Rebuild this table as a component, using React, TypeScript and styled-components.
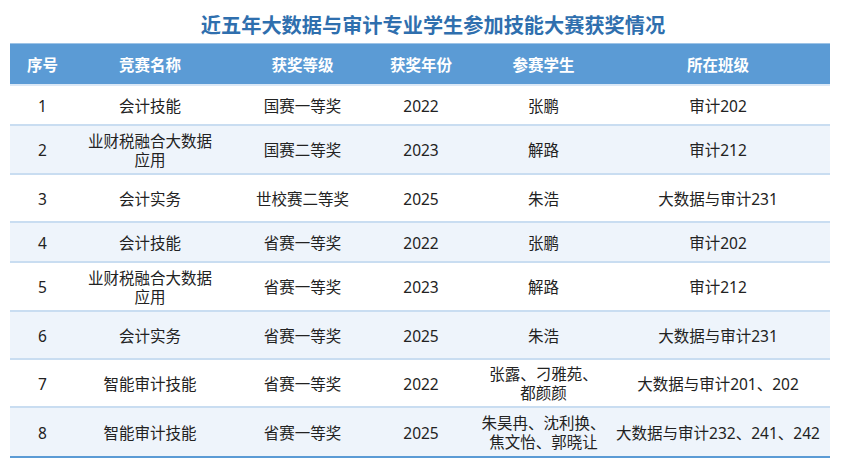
import React from "react";
import styled, { createGlobalStyle } from "styled-components";

const Global = createGlobalStyle`
  html, body { margin: 0; padding: 0; background: #ffffff; }
  body { font-family: "Noto Sans", "Noto Sans CJK SC", sans-serif; }
`;

const Page = styled.div`
  width: 841px;
  height: 467px;
  display: flex;
  flex-direction: column;
  align-items: flex-start;
  padding: 0 0 0 10px;
  box-sizing: border-box;
`;

const Title = styled.h1`
  margin: 0;
  width: 820px;
  height: 43px;
  display: flex;
  align-items: center;
  justify-content: center;
  padding: 6px 0 0 26px;
  box-sizing: border-box;
  font-family: "Noto Sans CJK SC", sans-serif;
  font-weight: 700;
  font-size: 20.2px;
  color: #2f6fae;
`;

const Table = styled.div`
  width: 820px;
  display: flex;
  flex-direction: column;
  border-bottom: 2px solid #5b9bd5;
`;

const cols = "65px 150px 155px 82px 163px 205px";

const HeaderRow = styled.div`
  display: grid;
  grid-template-columns: ${cols};
  height: 43px;
  background: #5b9bd5;
  border-top: 1px solid #9dc3e6;
  border-bottom: 2px solid #dbe8f6;
  box-sizing: border-box;
`;

const HeadCell = styled.div<{ $pr?: number }>`
  display: flex;
  align-items: center;
  justify-content: center;
  padding-right: ${(p) => p.$pr ?? 0}px;
  color: #ffffff;
  font-family: "Noto Sans CJK SC", sans-serif;
  font-weight: 700;
  font-size: 15.5px;
`;

const Row = styled.div<{ $h: number; $alt: boolean; $last: boolean }>`
  display: grid;
  grid-template-columns: ${cols};
  height: ${(p) => p.$h}px;
  background: ${(p) => (p.$alt ? "#eef4fb" : "#ffffff")};
  border-bottom: ${(p) => (p.$last ? "none" : "2px solid #c9ddf1")};
  box-sizing: border-box;
`;

const Cell = styled.div<{ $pr?: number }>`
  display: flex;
  align-items: center;
  justify-content: center;
  text-align: center;
  padding-top: 2px;
  padding-right: ${(p) => p.$pr ?? 0}px;
  white-space: pre-line;
  color: #222222;
  font-size: 15.5px;
  line-height: 19px;
  font-family: "Noto Sans", "Noto Sans CJK SC", sans-serif;
`;

const Nowrap = styled.span`
  white-space: nowrap;
`;

type Item = {
  no: string;
  name: string;
  level: string;
  year: string;
  students: string;
  cls: string;
  h: number;
};

const data: Item[] = [
  { no: "1", name: "会计技能", level: "国赛一等奖", year: "2022", students: "张鹏", cls: "审计202", h: 40 },
  { no: "2", name: "业财税融合大数据\n应用", level: "国赛二等奖", year: "2023", students: "解路", cls: "审计212", h: 49 },
  { no: "3", name: "会计实务", level: "世校赛二等奖", year: "2025", students: "朱浩", cls: "大数据与审计231", h: 48 },
  { no: "4", name: "会计技能", level: "省赛一等奖", year: "2022", students: "张鹏", cls: "审计202", h: 40 },
  { no: "5", name: "业财税融合大数据\n应用", level: "省赛一等奖", year: "2023", students: "解路", cls: "审计212", h: 49 },
  { no: "6", name: "会计实务", level: "省赛一等奖", year: "2025", students: "朱浩", cls: "大数据与审计231", h: 48 },
  { no: "7", name: "智能审计技能", level: "省赛一等奖", year: "2022", students: "张露、刁雅苑、\n都颜颜", cls: "大数据与审计201、202", h: 48 },
  { no: "8", name: "智能审计技能", level: "省赛一等奖", year: "2025", students: "朱昊冉、沈利换、\n焦文怡、郭晓让", cls: "大数据与审计232、241、242", h: 48 },
];

const headers = ["序号", "竞赛名称", "获奖等级", "获奖年份", "参赛学生", "所在班级"];

export default function App() {
  return (
    <>
      <Global />
      <Page>
        <Title>近五年大数据与审计专业学生参加技能大赛获奖情况</Title>
        <Table>
          <HeaderRow>
            {headers.map((h, i) => (
              <HeadCell key={h} $pr={i === 5 ? 19 : 0}>
                {h}
              </HeadCell>
            ))}
          </HeaderRow>
          {data.map((d, i) => (
            <Row key={d.no} $h={d.h} $alt={i % 2 === 1} $last={i === data.length - 1}>
              <Cell>{d.no}</Cell>
              <Cell>{d.name}</Cell>
              <Cell>{d.level}</Cell>
              <Cell>{d.year}</Cell>
              <Cell>{d.students}</Cell>
              <Cell $pr={19}>
                <Nowrap>{d.cls}</Nowrap>
              </Cell>
            </Row>
          ))}
        </Table>
      </Page>
    </>
  );
}
